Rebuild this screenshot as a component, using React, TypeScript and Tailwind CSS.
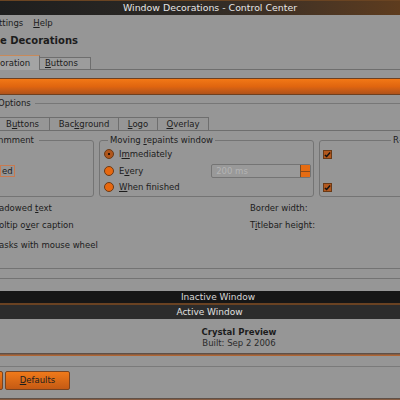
import React from "react";

const Radio = ({ on }: { on?: boolean }) => (
  <span
    className={`relative inline-block shrink-0 w-[10px] h-[10px] rounded-full border border-[#6a3a16] ${
      on ? "bg-[#b0561c]" : "bg-[#e8680f]"
    }`}
  >
    {on && <span className="absolute left-[3px] top-[3px] w-[2px] h-[2px] rounded-full bg-black" />}
  </span>
);

const Check = () => (
  <span className="inline-flex items-center justify-center w-[9px] h-[9px] bg-[#b2581e] border border-[#6a3a16]">
    <svg viewBox="0 0 8 8" className="w-[7px] h-[7px]">
      <path d="M1 4.5 L3 6.3 L7 1.8" stroke="#111" strokeWidth="1.6" fill="none" />
    </svg>
  </span>
);

const App = () => {
  return (
    <div className="w-[400px] h-[400px] overflow-hidden bg-[#969696] font-['DejaVu_Sans',sans-serif] text-[8.5px] text-[#1c1c1c] flex flex-col leading-none">
      {/* title bar */}
      <div className="h-[15px] shrink-0 bg-gradient-to-r from-[#1e1e1e] via-[#2e2a26] to-[#5e3c1e] border-t border-[#6a4422] flex items-center justify-center pl-[20px] text-[#e6e6e6] text-[9.4px]">
        Window Decorations - Control Center
      </div>

      {/* menu bar */}
      <div className="h-[15px] shrink-0 flex items-center gap-[10px] pt-[1px]">
        <span className="-ml-[1px]">ttings</span>
        <span>
          <span className="underline">H</span>elp
        </span>
      </div>

      {/* heading */}
      <div className="h-[20px] shrink-0 flex items-center font-bold text-[10px] pt-[1px]">
        e Decorations
      </div>

      {/* main tabs */}
      <div className="h-[15px] shrink-0 flex items-end mt-[5px]">
        <div className="h-[15px] w-[40px] bg-[#a4a4a4] border-t border-[#c88a5a] border-r border-r-[#6e6e6e] flex items-center">
          oration
        </div>
        <div className="h-[13px] w-[51px] bg-[#9c9c9c] border-t border-r border-b border-[#6e6e6e] flex items-center pl-[5px]">
          <span>
            <span className="underline">B</span>uttons
          </span>
        </div>
        <div className="flex-1 border-b border-[#6e6e6e]" />
      </div>

      {/* orange bar */}
      <div className="h-[17px] shrink-0 mt-[8px] border-y border-[#6e4020] bg-gradient-to-b from-[#f27816] via-[#e0650f] to-[#b0531a]" />

      {/* options label */}
      <div className="h-[10px] shrink-0 flex items-center gap-[4px] mt-[3px]">
        <span className="-ml-[2px]">Options</span>
        <div className="flex-1 border-t border-[#777]" />
      </div>

      {/* sub tabs */}
      <div className="h-[14px] shrink-0 flex mt-[9px] border-b border-[#6e6e6e]">
        <div className="w-[50px] border-t border-r border-[#6e6e6e] flex items-center justify-center pr-[4px]">
          <span>
            B<span className="underline">u</span>ttons
          </span>
        </div>
        <div className="w-[69px] border-t border-r border-[#6e6e6e] flex items-center justify-center">
          <span>
            Bac<span className="underline">k</span>ground
          </span>
        </div>
        <div className="w-[39px] border-t border-r border-[#6e6e6e] flex items-center justify-center">
          <span>
            <span className="underline">L</span>ogo
          </span>
        </div>
        <div className="w-[51px] border-t border-r border-[#6e6e6e] flex items-center justify-center">
          <span>
            <span className="underline">O</span>verlay
          </span>
        </div>
      </div>

      {/* groups */}
      <div className="h-[57px] shrink-0 flex mt-[9px] gap-[5px]">
        <div className="relative w-[97px] -ml-[3px] border border-[#747474] rounded-[3px] shrink-0">
          <div className="absolute -top-[5px] left-0 bg-[#969696] pr-[5px]">nmment</div>
          <div className="absolute left-[2px] top-[24px] w-[15px] h-[12px] border border-[#c87a50] flex items-center pl-[1px]">
            ed
          </div>
        </div>
        <div className="relative w-[215px] border border-[#747474] rounded-[3px] shrink-0">
          <div className="absolute -top-[5px] left-[8px] bg-[#969696] px-[2px]">
            Moving <span className="underline">r</span>epaints window
          </div>
          <div className="flex flex-col pl-[4px] pt-[8px]">
            <div className="h-[10px] flex items-center gap-[5px]">
              <Radio on />
              <span>
                I<span className="underline">m</span>mediately
              </span>
            </div>
            <div className="h-[14px] mt-[5px] flex items-center gap-[5px]">
              <Radio />
              <span>
                E<span className="underline">v</span>ery
              </span>
              <div className="ml-[63px] w-[100px] h-[14px] border border-[#747474] rounded-[2px] bg-[#999] flex items-center">
                <span className="flex-1 pl-[4px] text-[#b4b4b4]">200 ms</span>
                <div className="w-[10px] h-full flex flex-col border-l border-[#7a4a22]">
                  <div className="flex-1 bg-[#e66c12] border-b border-[#8a4a1a]" />
                  <div className="flex-1 bg-[#e66c12]" />
                </div>
              </div>
            </div>
            <div className="h-[10px] mt-[4px] flex items-center gap-[5px]">
              <Radio />
              <span>
                <span className="underline">W</span>hen finished
              </span>
            </div>
          </div>
        </div>
        <div className="relative flex-1 border border-[#747474] rounded-[3px] -mr-[10px]">
          <div className="absolute -top-[5px] right-[10px] bg-[#969696] pl-[2px]">R</div>
          <div className="flex flex-col pl-[3px] pt-[9px] gap-[24px]">
            <Check />
            <Check />
          </div>
        </div>
      </div>

      {/* option rows */}
      <div className="shrink-0 flex mt-[3px]">
        <div className="w-[250px] flex flex-col -ml-[1px]">
          <div className="h-[17px] flex items-center">
            <span>
              adowed <span className="underline">t</span>ext
            </span>
          </div>
          <div className="h-[17px] flex items-center">
            <span>
              oltip o<span className="underline">v</span>er caption
            </span>
          </div>
          <div className="h-[17px] mt-[3px] flex items-center">
            <span>asks with mouse wheel</span>
          </div>
        </div>
        <div className="flex flex-col ml-[1px]">
          <div className="h-[17px] flex items-center">Border width:</div>
          <div className="h-[17px] flex items-center">
            <span>
              T<span className="underline">i</span>tlebar height:
            </span>
          </div>
        </div>
      </div>

      {/* separators */}
      <div className="h-[11px] shrink-0 mt-[14px] border-t border-b border-[#737373]" />

      {/* preview */}
      <div className="h-[14px] shrink-0 mt-[12px] bg-[#161616] border-b-[2px] border-[#6a4222] flex items-center justify-center pl-[36px] text-[#d8d8d8] text-[9px]">
        Inactive Window
      </div>
      <div className="h-[14px] shrink-0 bg-[#2c2c2c] flex items-center justify-center pl-[19px] text-[#e0e0e0] text-[9px]">
        Active Window
      </div>
      <div className="h-[34px] shrink-0 flex flex-col items-center justify-center gap-[2px] pl-[78px] pt-[3px]">
        <span className="font-bold">Crystal Preview</span>
        <span className="text-[#2a2a2a]">Built: Sep 2 2006</span>
      </div>
      <div className="h-[3px] shrink-0 bg-gradient-to-b from-[#4a4a4a] to-[#c46a28]" />

      {/* buttons */}
      <div className="h-[11px] shrink-0 border-b border-[#7a7a7a]" />
      <div className="h-[31px] shrink-0 flex items-start gap-[2px] pt-[4px] -ml-[6px]">
        <div className="w-[9px] h-[19px] rounded-[2px] border border-[#7a4420] bg-gradient-to-b from-[#f07a1a] to-[#c45a14]" />
        <div className="w-[65px] h-[19px] rounded-[2px] border border-[#7a4420] bg-gradient-to-b from-[#f07a1a] to-[#c45a14] flex items-center justify-center">
          <span>
            <span className="underline">D</span>efaults
          </span>
        </div>
      </div>
      <div className="h-[3px] shrink-0 bg-gradient-to-b from-[#4a4a4a] to-[#c46a28]" />
    </div>
  );
};

export default App;
